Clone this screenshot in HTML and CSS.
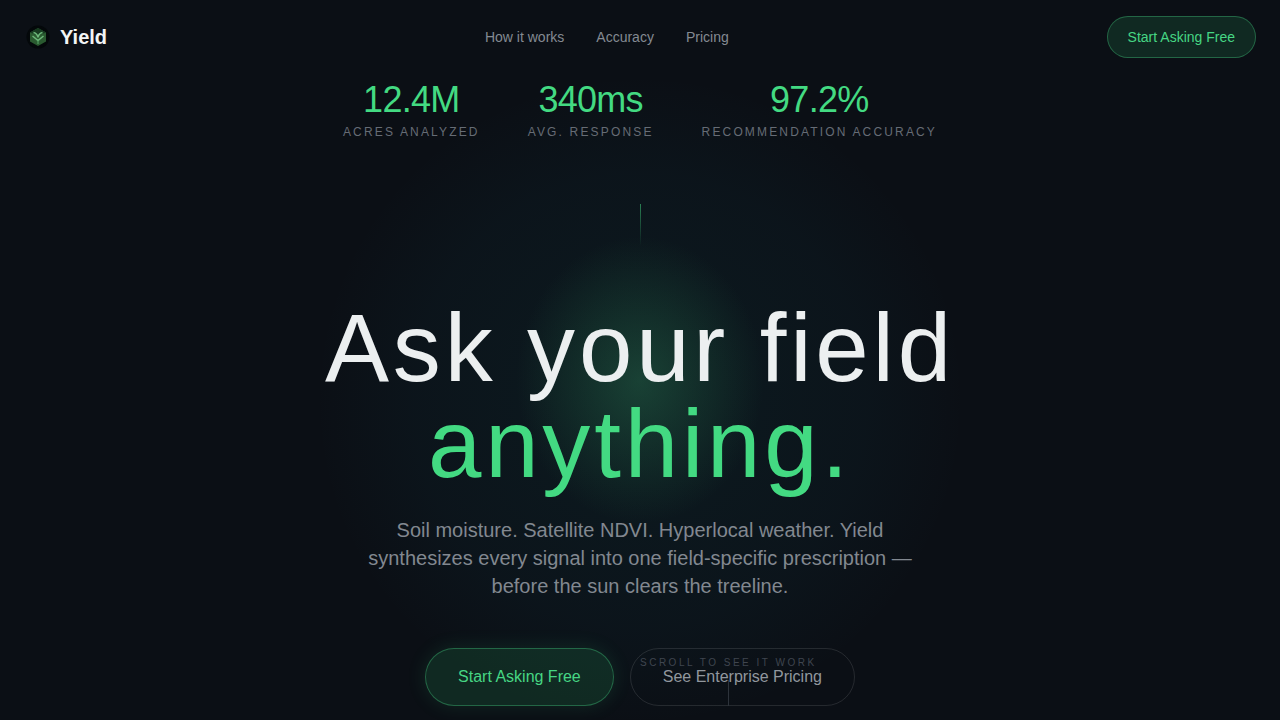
FILE: index.html
```html
<!DOCTYPE html>
<html lang="en">
<head>
  <meta charset="UTF-8">
  <meta name="viewport" content="width=device-width, initial-scale=1.0">
  <title>Yield</title>
  <link rel="stylesheet" href="styles.css">
</head>
<body>
  <div class="glow-wide"></div>
  <div class="glow-core"></div>
  <nav class="topbar">
    <a href="#" class="brand">
      <svg class="brand-icon" width="24" height="24" viewBox="0 0 24 24">
        <circle cx="12" cy="12" r="11.500" fill="#04080a"/>
        <path d="M12 3 20 7.500V16.500L12 21 4 16.500V7.500Z" fill="#2a5a30"/>
        <path d="M12 3 20 7.500 12 10.500 4 7.500Z" fill="#173a20"/>
        <path d="M6.500 11 12 15.500 17.500 11M7.500 7.500C9.500 8 11.500 9.500 12 12.500C12.500 9.500 14.500 8 16.500 7.500" fill="none" stroke="#6db87a" stroke-width="1.500"/>
        <path d="M12 15.500V19" stroke="#4f9a5e" stroke-width="1.200"/>
      </svg>
      <span>Yield</span>
    </a>
    <div class="nav-links">
      <a href="#">How it works</a>
      <a href="#">Accuracy</a>
      <a href="#">Pricing</a>
    </div>
    <a href="#" class="btn btn-small">Start Asking Free</a>
  </nav>
  <section class="stats">
    <div class="stat"><div class="stat-num">12.4M</div><div class="stat-label">ACRES ANALYZED</div></div>
    <div class="stat"><div class="stat-num">340ms</div><div class="stat-label">AVG. RESPONSE</div></div>
    <div class="stat"><div class="stat-num">97.2%</div><div class="stat-label">RECOMMENDATION ACCURACY</div></div>
  </section>
  <section class="hero">
    <div class="tick"></div>
    <h1>Ask your field<br><span class="accent">anything.</span></h1>
    <p class="sub">Soil moisture. Satellite NDVI. Hyperlocal weather. Yield synthesizes every signal into one field-specific prescription — before the sun clears the treeline.</p>
    <div class="actions">
      <a href="#" class="btn btn-big">Start Asking Free</a>
      <a href="#" class="btn-ghost">See Enterprise Pricing</a>
    </div>
  </section>
  <div class="scroll-hint">
    <span>SCROLL TO SEE IT WORK</span>
    <div class="scroll-line"></div>
  </div>
</body>
</html>
```
FILE: styles.css
```css
*{margin:0;padding:0;box-sizing:border-box}
html,body{height:720px;overflow:hidden}
body{font-family:'Liberation Sans',Arial,sans-serif;background:#0b0f15;color:#eceff0;position:relative}
a{text-decoration:none;color:inherit}
.glow-wide{position:absolute;left:320px;top:80px;width:640px;height:640px;border-radius:50%;background:radial-gradient(circle,rgba(14,52,56,.3) 0%,rgba(14,44,54,.18) 50%,rgba(11,15,21,0) 72%)}
.glow-core{position:absolute;left:515px;top:235px;width:250px;height:290px;border-radius:50%;background:radial-gradient(ellipse,rgba(48,135,90,.36) 0%,rgba(40,115,78,.22) 35%,rgba(20,70,50,0) 70%)}
.topbar{position:relative;display:flex;align-items:center;justify-content:space-between;height:74px;padding:0 24px 0 26px}
.brand{display:flex;align-items:center;gap:10px;font-size:20px;font-weight:700;color:#f3f5f5}
.brand-icon{display:block}
.nav-links{display:flex;gap:32px;font-size:14px;color:#848a92}
.btn{display:block;color:#46d684;background:rgba(34,110,70,.28);border:1px solid rgba(70,214,132,.36)}
.btn-small{font-size:14px;padding:13px 20px;border-radius:21px;line-height:14px}
.stats{position:relative;display:flex;justify-content:center;gap:48px;height:72px;padding-top:4px}
.stat{text-align:center}
.stat-num{font-size:36px;line-height:44px;letter-spacing:-.72px;color:#43da82}
.stat-label{font-size:12px;line-height:16px;letter-spacing:2.16px;color:#666c75;margin-top:2px}
.hero{position:relative;display:flex;flex-direction:column;align-items:center;padding-top:58px}
.tick{width:1px;height:42px;background:linear-gradient(to bottom,rgba(67,218,130,.55),rgba(67,218,130,0))}
h1{font-size:96px;line-height:96px;font-weight:400;letter-spacing:3.84px;text-align:center;margin-top:54px;color:#eceff0}
.accent{color:#43da82}
.sub{width:560px;font-size:20px;line-height:28px;text-align:center;color:#828890;margin-top:24px}
.actions{display:flex;gap:16px;margin-top:48px}
.btn-big{font-size:16px;height:58px;line-height:56px;padding:0 32px;border-radius:29px;box-shadow:0 0 20px rgba(67,218,130,.12)}
.btn-ghost{display:block;font-size:16px;height:58px;line-height:56px;padding:0 32px;border-radius:29px;color:#91979e;border:1px solid rgba(255,255,255,.11)}
.scroll-hint{position:absolute;left:640px;top:657px;display:flex;flex-direction:column;align-items:center}
.scroll-hint span{font-size:10px;line-height:12px;letter-spacing:2.5px;color:#3f454f}
.scroll-line{width:1px;height:26px;margin-top:11px;background:#2d333b}
```
